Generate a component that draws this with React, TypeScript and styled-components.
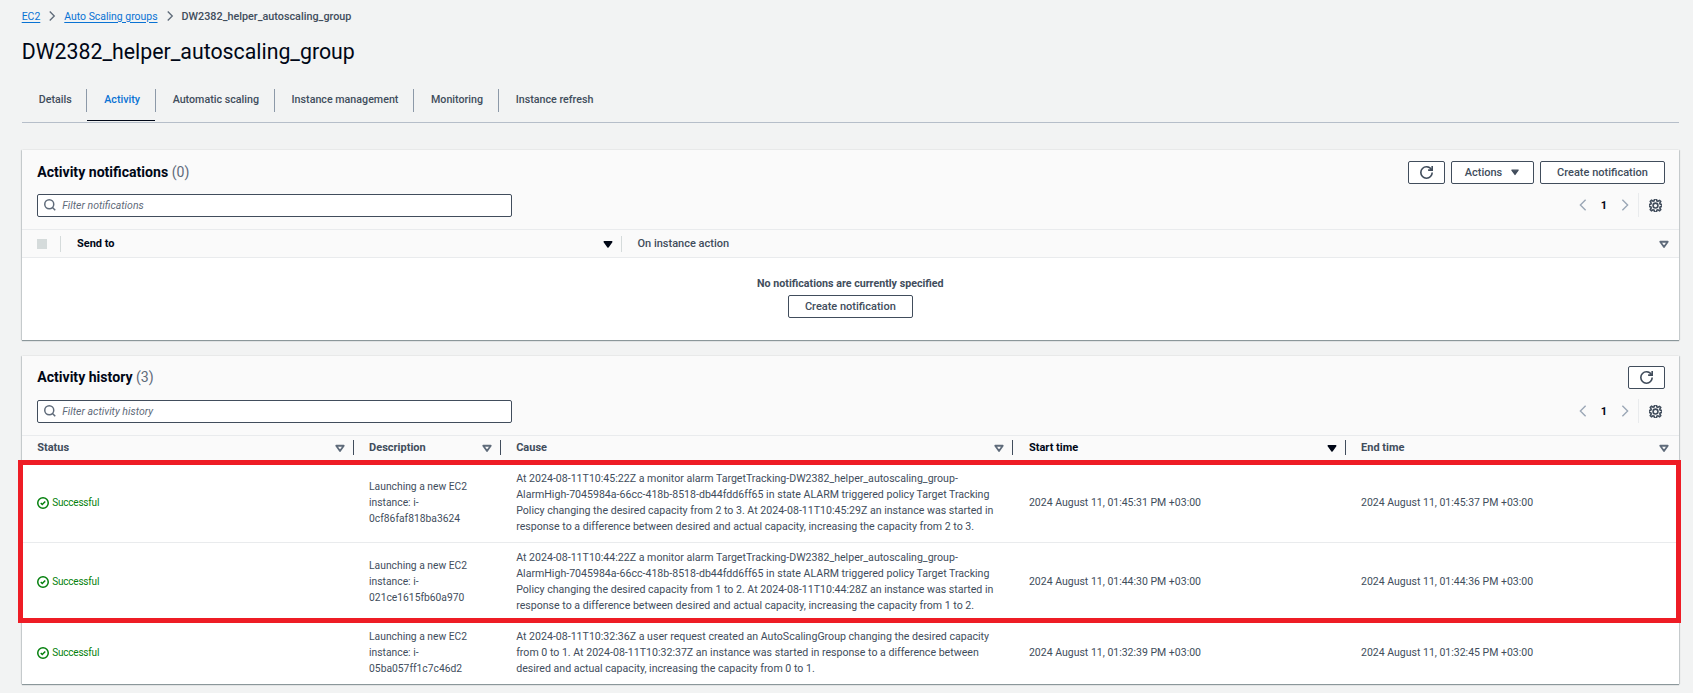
import React from "react";
import styled, { createGlobalStyle } from "styled-components";

const GlobalStyle = createGlobalStyle`
  html, body {
    margin: 0;
    padding: 0;
    background: #f2f3f3;
    font-family: Roboto, "Noto Sans", Arial, sans-serif;
    color: #000716;
    overflow: hidden;
  }
  * {
    box-sizing: border-box;
  }
`;

const Page = styled.div`
  padding: 0 14px 0 21.7px;
  width: 1693px;
  height: 693px;
`;

const Breadcrumbs = styled.nav`
  display: flex;
  align-items: center;
  height: 32px;
  font-size: 10.45px;
  color: #414d5c;
`;

const Crumb = styled.a`
  color: #0972d3;
  text-decoration: underline;
  text-underline-offset: 2px;
`;

const Current = styled.span`
  font-size: 10.8px;
  font-weight: 500;
  color: #414d5c;
`;

const CrumbArrow = styled.svg`
  width: 12px;
  height: 12px;
  margin: 0 6px;
  fill: none;
  stroke: #5f6b7a;
  stroke-width: 1.8;
`;

const Title = styled.h1`
  margin: 0;
  height: 40px;
  line-height: 40px;
  font-size: 21.3px;
  font-weight: 400;
  color: #000716;
`;

const Tabs = styled.div`
  display: flex;
  align-items: flex-start;
  height: 33.5px;
  margin-top: 17px;
  border-bottom: 1px solid #b6bec9;
`;

const Tab = styled.div<{ $active?: boolean }>`
  display: flex;
  align-items: center;
  height: 31.5px;
  padding: 0 14.6px 9.5px 17px;
  font-size: 10.7px;
  font-weight: 500;
  color: ${(p) => (p.$active ? "#0972d3" : "#414d5c")};
  border-bottom: 1px solid ${(p) => (p.$active ? "#000716" : "transparent")};
`;

const TabDivider = styled.span`
  flex: none;
  width: 1px;
  height: 23px;
  background: #8d99a8;
`;

const Card = styled.section<{ $top: number }>`
  position: relative;
  margin-top: ${(p) => p.$top}px;
  background: #fff;
  box-shadow: 0 1px 1px rgba(0, 28, 36, 0.4), 1px 0 1px rgba(0, 28, 36, 0.12), -1px 0 1px rgba(0, 28, 36, 0.12);
`;

const CardHead = styled.div<{ $pad: number }>`
  background: #fafafa;
  padding: ${(p) => p.$pad}px 14px 12px 15.5px;
`;

const HeadRow = styled.div`
  display: flex;
  align-items: center;
  justify-content: space-between;
  height: 23px;
`;

const CardTitle = styled.h2`
  margin: 0;
  padding-bottom: 1px;
  font-size: 14.1px;
  font-weight: 700;
  color: #000716;
`;

const Count = styled.span`
  font-weight: 400;
  color: #5f6b7a;
`;

const Actions = styled.div`
  display: flex;
  gap: 6px;
`;

const Button = styled.button<{ $width: number }>`
  display: flex;
  align-items: center;
  justify-content: center;
  gap: 8px;
  width: ${(p) => p.$width}px;
  height: 23px;
  padding: 0;
  background: #fff;
  border: 1px solid #414d5c;
  border-radius: 2px;
  font-family: inherit;
  font-size: 11px;
  font-weight: 500;
  color: #414d5c;
`;

const ToolRow = styled.div<{ $gap: number }>`
  display: flex;
  align-items: center;
  justify-content: space-between;
  height: 23px;
  margin-top: ${(p) => p.$gap}px;
`;

const SearchBox = styled.div`
  display: flex;
  align-items: center;
  gap: 6px;
  width: 475px;
  height: 23px;
  padding-left: 6px;
  background: #fff;
  border: 1px solid #414d5c;
  border-radius: 2px;
  font-size: 10.5px;
  font-style: italic;
  color: #5f6b7a;
`;

const Pager = styled.div`
  display: flex;
  align-items: center;
  height: 24px;
  margin-right: 3px;
  font-size: 11px;
  font-weight: 700;
  color: #000716;
`;

const PageNumber = styled.span`
  margin: 0 11px;
`;

const PagerDivider = styled.span`
  width: 1px;
  height: 24px;
  margin: 0 10px 0 6px;
  background: #e9ebed;
`;

const Icon = styled.svg<{ $size: number; $color?: string; $width?: number }>`
  flex: none;
  width: ${(p) => p.$size}px;
  height: ${(p) => p.$size}px;
  fill: none;
  stroke: ${(p) => p.$color ?? "#414d5c"};
  stroke-width: ${(p) => p.$width ?? 2};
`;

const SolidCaret = styled.svg<{ $size: number; $color?: string }>`
  flex: none;
  width: ${(p) => p.$size}px;
  height: ${(p) => p.$size}px;
  fill: ${(p) => p.$color ?? "#414d5c"};
  stroke: ${(p) => p.$color ?? "#414d5c"};
  stroke-width: 2;
  stroke-linejoin: round;
`;

const HeaderGrid = styled.div<{ $cols: string }>`
  display: grid;
  grid-template-columns: ${(p) => p.$cols};
  height: 29.5px;
  background: #fafafa;
  border-top: 1px solid #e9ebed;
  border-bottom: 1px solid #e9ebed;
`;

const HeaderCell = styled.div<{ $active?: boolean; $lift?: boolean }>`
  display: flex;
  align-items: center;
  padding: ${(p) => (p.$lift ? "0 0 3px 15.5px" : "1px 0 0 15.5px")};
  font-size: 11px;
  font-weight: 700;
  color: ${(p) => (p.$active ? "#000716" : "#414d5c")};
`;

const HeaderText = styled.span<{ $light?: boolean }>`
  margin-right: auto;
  font-weight: ${(p) => (p.$light ? 500 : 700)};
`;

const SortSlot = styled.span<{ $end?: boolean }>`
  display: flex;
  margin-right: ${(p) => (p.$end ? "9px" : "7px")};
`;

const ColDivider = styled.span<{ $strong?: boolean }>`
  width: 1px;
  height: ${(p) => (p.$strong ? "15px" : "16px")};
  background: ${(p) => (p.$strong ? "#414d5c" : "#d5dbdb")};
`;

const Checkbox = styled.span`
  width: 10px;
  height: 10px;
  background: #d5dbdb;
  margin-right: auto;
`;

const EmptyState = styled.div`
  display: flex;
  flex-direction: column;
  align-items: center;
  height: 82px;
  padding-top: 19px;
  font-size: 10.7px;
  font-weight: 700;
  color: #414d5c;
`;

const EmptyButton = styled(Button)`
  margin-top: 5px;
`;

const Row = styled.div<{ $last?: boolean }>`
  display: grid;
  grid-template-columns: 331.9px 147.1px 512.8px 332.1px 1fr;
  align-items: center;
  padding: 6.5px 0;
  border-bottom: ${(p) => (p.$last ? "none" : "1px solid #e9ebed")};
  font-size: 10.5px;
  line-height: 16.25px;
  color: #414d5c;
`;

const Cell = styled.div`
  padding-left: 15.5px;
  white-space: nowrap;
`;

const DescriptionCell = styled(Cell)`
  font-size: 10.3px;
`;

const CauseCell = styled(Cell)`
  font-size: 10.6px;
`;

const Line = styled.div`
  white-space: nowrap;
`;

const Status = styled.div`
  display: flex;
  align-items: center;
  gap: 3px;
  padding-left: 15.5px;
  font-size: 10px;
  letter-spacing: -0.2px;
  color: #037f0c;
`;

const RedMark = styled.div`
  position: absolute;
  left: -3.7px;
  top: 104px;
  width: 1662.5px;
  height: 163px;
  border: 5px solid #ee1c25;
`;

const Refresh = () => (
  <Icon $size={13} viewBox="0 0 16 16">
    <path d="M10 5h5V0" />
    <path d="M15 8a6.957 6.957 0 0 1-7 7 6.957 6.957 0 0 1-7-7 6.957 6.957 0 0 1 7-7 6.87 6.87 0 0 1 6.3 4" />
  </Icon>
);

const Search = () => (
  <Icon $size={12} $color="#5f6b7a" viewBox="0 0 16 16">
    <circle cx="7" cy="7" r="6" />
    <path d="m11 11 4 4" />
  </Icon>
);

const Gear = () => (
  <Icon $size={13} viewBox="0 0 16 16">
    <path d="M13.3 5.2l1.1-2.1L13 1.7l-2.1 1.1c-.3-.2-.7-.3-1.1-.4L9 0H7l-.8 2.3c-.3.1-.7.2-1 .4L3.1 1.6 1.6 3.1l1.1 2.1c-.2.3-.3.7-.4 1L0 7v2l2.3.8c.1.4.3.7.4 1.1l-1.1 2.1 1.4 1.4 2.1-1.1c.3.2.7.3 1.1.4L7 16h2l.8-2.3c.4-.1.7-.3 1.1-.4l2.1 1.1 1.4-1.4-1.1-2.1c.2-.3.3-.7.4-1.1L16 9V7l-2.3-.8c-.1-.3-.2-.7-.4-1z" />
    <circle cx="8" cy="8" r="3" />
  </Icon>
);

const SortOutline = () => (
  <Icon $size={12} $color="#5f6b7a" $width={2.4} viewBox="0 0 16 16">
    <path d="m8 12 5-7H3z" strokeLinejoin="round" />
  </Icon>
);

const SortFilled = () => (
  <SolidCaret $size={12} $color="#000716" viewBox="0 0 16 16">
    <path d="m8 12 5-7H3z" />
  </SolidCaret>
);

const Pagination = () => (
  <Pager>
    <Icon $size={14} $color="#9ba7b6" $width={1.6} viewBox="0 0 16 16">
      <path d="m11 2-6 6 6 6" />
    </Icon>
    <PageNumber>1</PageNumber>
    <Icon $size={14} $color="#9ba7b6" $width={1.6} viewBox="0 0 16 16">
      <path d="m5 2 6 6-6 6" />
    </Icon>
    <PagerDivider />
    <Gear />
  </Pager>
);

const Successful = () => (
  <Status>
    <Icon $size={12} $color="#037f0c" viewBox="0 0 16 16">
      <circle cx="8" cy="8" r="7" />
      <path d="m5 8 2 2 4-4" />
    </Icon>
    Successful
  </Status>
);

const history = [
  {
    description: ["Launching a new EC2", "instance: i-", "0cf86faf818ba3624"],
    cause: [
      "At 2024-08-11T10:45:22Z a monitor alarm TargetTracking-DW2382_helper_autoscaling_group-",
      "AlarmHigh-7045984a-66cc-418b-8518-db44fdd6ff65 in state ALARM triggered policy Target Tracking",
      "Policy changing the desired capacity from 2 to 3. At 2024-08-11T10:45:29Z an instance was started in",
      "response to a difference between desired and actual capacity, increasing the capacity from 2 to 3.",
    ],
    start: "2024 August 11, 01:45:31 PM +03:00",
    end: "2024 August 11, 01:45:37 PM +03:00",
  },
  {
    description: ["Launching a new EC2", "instance: i-", "021ce1615fb60a970"],
    cause: [
      "At 2024-08-11T10:44:22Z a monitor alarm TargetTracking-DW2382_helper_autoscaling_group-",
      "AlarmHigh-7045984a-66cc-418b-8518-db44fdd6ff65 in state ALARM triggered policy Target Tracking",
      "Policy changing the desired capacity from 1 to 2. At 2024-08-11T10:44:28Z an instance was started in",
      "response to a difference between desired and actual capacity, increasing the capacity from 1 to 2.",
    ],
    start: "2024 August 11, 01:44:30 PM +03:00",
    end: "2024 August 11, 01:44:36 PM +03:00",
  },
  {
    description: ["Launching a new EC2", "instance: i-", "05ba057ff1c7c46d2"],
    cause: [
      "At 2024-08-11T10:32:36Z a user request created an AutoScalingGroup changing the desired capacity",
      "from 0 to 1. At 2024-08-11T10:32:37Z an instance was started in response to a difference between",
      "desired and actual capacity, increasing the capacity from 0 to 1.",
    ],
    start: "2024 August 11, 01:32:39 PM +03:00",
    end: "2024 August 11, 01:32:45 PM +03:00",
  },
];

const historyColumns = [
  { label: "Status" },
  { label: "Description" },
  { label: "Cause" },
  { label: "Start time", active: true },
  { label: "End time" },
];

export default function App() {
  return (
    <Page>
      <GlobalStyle />
      <Breadcrumbs>
        <Crumb>EC2</Crumb>
        <CrumbArrow viewBox="0 0 16 16">
          <path d="m5 2 6 6-6 6" />
        </CrumbArrow>
        <Crumb>Auto Scaling groups</Crumb>
        <CrumbArrow viewBox="0 0 16 16">
          <path d="m5 2 6 6-6 6" />
        </CrumbArrow>
        <Current>DW2382_helper_autoscaling_group</Current>
      </Breadcrumbs>
      <Title>DW2382_helper_autoscaling_group</Title>
      <Tabs>
        <Tab>Details</Tab>
        <TabDivider />
        <Tab $active>Activity</Tab>
        <TabDivider />
        <Tab>Automatic scaling</Tab>
        <TabDivider />
        <Tab>Instance management</Tab>
        <TabDivider />
        <Tab>Monitoring</Tab>
        <TabDivider />
        <Tab>Instance refresh</Tab>
      </Tabs>

      <Card $top={27}>
        <CardHead $pad={11}>
          <HeadRow>
            <CardTitle>
              Activity notifications <Count>(0)</Count>
            </CardTitle>
            <Actions>
              <Button $width={37}>
                <Refresh />
              </Button>
              <Button $width={83}>
                Actions
                <SolidCaret $size={10} viewBox="0 0 16 16">
                  <path d="m8 12 5-7H3z" />
                </SolidCaret>
              </Button>
              <Button $width={125}>Create notification</Button>
            </Actions>
          </HeadRow>
          <ToolRow $gap={10}>
            <SearchBox>
              <Search />
              Filter notifications
            </SearchBox>
            <Pagination />
          </ToolRow>
        </CardHead>
        <HeaderGrid $cols="39.8px 560.5px 1fr">
          <HeaderCell>
            <Checkbox />
            <ColDivider />
          </HeaderCell>
          <HeaderCell $active>
            <HeaderText>Send to</HeaderText>
            <SortSlot>
              <SortFilled />
            </SortSlot>
            <ColDivider />
          </HeaderCell>
          <HeaderCell>
            <HeaderText $light>On instance action</HeaderText>
            <SortSlot $end>
              <SortOutline />
            </SortSlot>
          </HeaderCell>
        </HeaderGrid>
        <EmptyState>
          No notifications are currently specified
          <EmptyButton $width={125}>Create notification</EmptyButton>
        </EmptyState>
      </Card>

      <Card $top={15.5}>
        <CardHead $pad={10}>
          <HeadRow>
            <CardTitle>
              Activity history <Count>(3)</Count>
            </CardTitle>
            <Button $width={37}>
              <Refresh />
            </Button>
          </HeadRow>
          <ToolRow $gap={11}>
            <SearchBox>
              <Search />
              Filter activity history
            </SearchBox>
            <Pagination />
          </ToolRow>
        </CardHead>
        <HeaderGrid $cols="331.9px 147.1px 512.8px 332.1px 1fr">
          {historyColumns.map((col, i) => (
            <HeaderCell key={col.label} $active={col.active} $lift>
              <HeaderText>{col.label}</HeaderText>
              <SortSlot $end={i === historyColumns.length - 1}>
                {col.active ? <SortFilled /> : <SortOutline />}
              </SortSlot>
              {i < historyColumns.length - 1 && <ColDivider $strong />}
            </HeaderCell>
          ))}
        </HeaderGrid>
        {history.map((row, i) => (
          <Row key={row.start} $last={i === history.length - 1}>
            <Successful />
            <DescriptionCell>
              {row.description.map((text) => (
                <Line key={text}>{text}</Line>
              ))}
            </DescriptionCell>
            <CauseCell>
              {row.cause.map((text) => (
                <Line key={text}>{text}</Line>
              ))}
            </CauseCell>
            <Cell>{row.start}</Cell>
            <Cell>{row.end}</Cell>
          </Row>
        ))}
        <RedMark />
      </Card>
    </Page>
  );
}
